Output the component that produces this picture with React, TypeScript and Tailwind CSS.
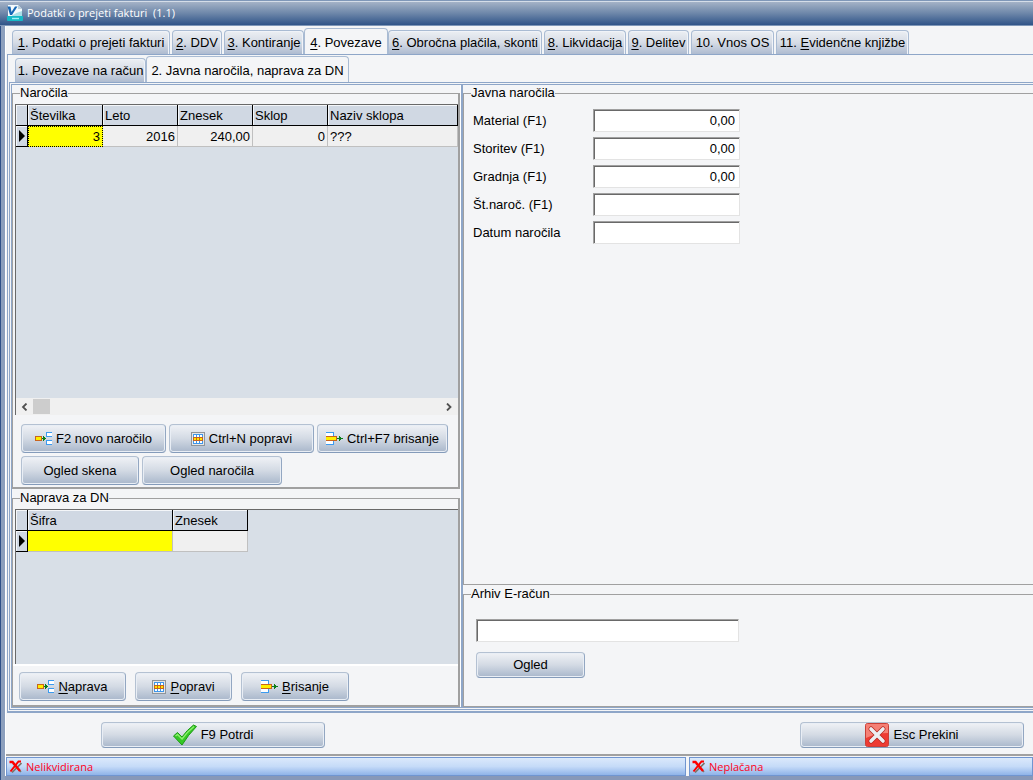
import { useState } from 'react'
import type { ReactNode } from 'react'
import clsx from 'clsx'

type Tab = { label: string; width: string }

const mainTabs: Tab[] = [
  { label: '&1. Podatki o prejeti fakturi', width: 'w-[158px]' },
  { label: '&2. DDV', width: 'w-[50px]' },
  { label: '&3. Kontiranje', width: 'w-[80px]' },
  { label: '&4. Povezave', width: 'w-[84px]' },
  { label: '&6. Obročna plačila, skonti', width: 'w-[154px]' },
  { label: '&8. Likvidacija', width: 'w-[82px]' },
  { label: '&9. Delitev', width: 'w-[61px]' },
  { label: '10. Vnos OS', width: 'w-[83px]' },
  { label: '11. &Evidenčne knjižbe', width: 'w-[133px]' },
]

const subTabs: Tab[] = [
  { label: '1. Povezave na račun', width: 'w-[131px]' },
  { label: '2. Javna naročila, naprava za DN', width: 'w-[203px]' },
]

const fields = [
  { id: 'material', label: 'Material (F1)', value: '0,00' },
  { id: 'storitev', label: 'Storitev (F1)', value: '0,00' },
  { id: 'gradnja', label: 'Gradnja (F1)', value: '0,00' },
  { id: 'stnaroc', label: 'Št.naroč. (F1)', value: '' },
  { id: 'datum', label: 'Datum naročila', value: '' },
]

// "&" marks the accelerator letter
function Accel({ text }: { text: string }) {
  const i = text.indexOf('&')
  if (i < 0) return <span>{text}</span>
  return (
    <span>
      {text.slice(0, i)}
      <u className="decoration-1 underline-offset-2">{text[i + 1]}</u>
      {text.slice(i + 2)}
    </span>
  )
}

function AppIcon() {
  return (
    <svg width="16" height="16" viewBox="0 0 16 16">
      <path d="M1 0h10l4 4v12H1z" fill="#f4fafc" />
      <path d="M11 0v4h4z" fill="#b9cfdb" />
      <path d="M0.500 1.500h3l1 5.500L8 1.500h2.500L5 10H3z" fill="#1767b5" />
      <path d="M5 10.500q4-3 10-4.500v5H5z" fill="#a9dfe8" />
      <path d="M0 11h16v4q0 1-1 1H1q-1 0-1-1z" fill="#16b9c6" />
      <path d="M5 13.500h7" stroke="#9ff0f4" strokeWidth="1.400" />
    </svg>
  )
}

function InsertIcon() {
  return (
    <svg width="17" height="14" viewBox="0 0 17 14" shapeRendering="crispEdges">
      <rect x="0" y="4" width="6" height="5" fill="#c8641e" />
      <rect x="1" y="5" width="5" height="3" fill="#ffee00" />
      <path d="M6 4h1v5H6zM7 6h1v1H7z" fill="#c8641e" />
      <path d="M7 6h4v1H7zM8 4h1v5H8zM9 5h1v3H9z" fill="#0b7d1a" />
      <path d="M11 1h6v3h-6zM11 9h6v3h-6z" fill="#fff" />
      <path d="M11 0h6v1h-6zM11 0h1v5h-1zM11 4h6v1h-6zM11 8h6v1h-6zM11 8h1v5h-1zM11 12h6v1h-6z" fill="#3b9bf0" />
    </svg>
  )
}

function EditIcon() {
  return (
    <svg width="14" height="14" viewBox="0 0 14 14" shapeRendering="crispEdges">
      <rect width="14" height="14" fill="#8f9499" />
      <rect x="1" y="1" width="12" height="12" fill="#e4e6e8" />
      <rect x="2" y="2" width="10" height="10" fill="#3f96ea" />
      <path d="M3 3h2v2H3zM6 3h2v2H6zM9 3h2v2H9zM3 9h2v2H3zM6 9h2v2H6zM9 9h2v2H9z" fill="#fff" />
      <rect x="2" y="5" width="10" height="4" fill="#c8641e" />
      <path d="M3 6h2v2H3zM6 6h2v2H6zM9 6h2v2H9z" fill="#ffe600" />
    </svg>
  )
}

function DeleteIcon() {
  return (
    <svg width="17" height="14" viewBox="0 0 17 14" shapeRendering="crispEdges">
      <path d="M0 1h7v3H0zM0 9h7v3H0z" fill="#fff" />
      <path d="M0 0h8v1H0zM7 0h1v4H7zM7 9h1v4H7zM0 12h8v1H0z" fill="#3b9bf0" />
      <rect x="0" y="4" width="11" height="5" fill="#c8641e" />
      <rect x="0" y="5" width="10" height="3" fill="#ffee00" />
      <path d="M11 6h6v1h-6zM13 4h1v5h-1zM14 5h1v3h-1z" fill="#0b7d1a" />
    </svg>
  )
}

function CheckIcon() {
  return (
    <svg width="24" height="22" viewBox="0 0 24 22">
      <path d="M0.500 12l4-3.500 4.500 4.500Q14 6 20.500 1l3 1.500Q15 11 9 21z" fill="#35c825" stroke="#1d9a16" />
      <path d="M2.500 12l2-1.500 4.500 4.500Q14 8 21 2.500" fill="none" stroke="#8df06f" strokeWidth="1.400" />
    </svg>
  )
}

function CancelIcon() {
  return (
    <svg width="24" height="24" viewBox="0 0 24 24">
      <rect x="0.500" y="0.500" width="23" height="23" rx="2" fill="#ee3b33" stroke="#c94038" />
      <path d="M1 2q0-1 1-1h20q1 0 1 1v8Q12 10 1 15z" fill="#f58075" />
      <path d="M6 6l12 12M18 6L6 18" stroke="#b3261e" strokeWidth="5" strokeLinecap="round" />
      <path d="M6 6l12 12M18 6L6 18" stroke="#eceef2" strokeWidth="3.600" strokeLinecap="round" />
    </svg>
  )
}

function CrossIcon() {
  return (
    <svg width="13" height="13" viewBox="0 0 13 13">
      <path d="M4 3.500l8 8.500M12.500 3L3 12.500" stroke="#7a7468" strokeWidth="1.600" />
      <path d="M0.500 2h3l7.500 9" fill="none" stroke="#ff0000" strokeWidth="2.400" />
      <path d="M12 1.500H9.500L1.500 11.500" fill="none" stroke="#ff0000" strokeWidth="2" />
    </svg>
  )
}

function Btn({ className, icon, text }: { className: string; icon?: ReactNode; text: string }) {
  return (
    <button
      type="button"
      className={clsx(
        'flex shrink-0 items-center justify-center gap-1 rounded border border-[#b4c1d2] border-b-[#849bba] border-r-[#93a7c2] bg-linear-to-b from-[#f0f2f6] via-[#d3dae4] to-[#a9b7cb] shadow-[inset_0_0_0_1px_#e9eef5]',
        className,
      )}
    >
      {icon}
      <Accel text={text} />
    </button>
  )
}

function TabBar({
  tabs,
  active,
  onSelect,
  className,
}: {
  tabs: Tab[]
  active: number
  onSelect: (i: number) => void
  className: string
}) {
  return (
    <div role="tablist" className={clsx('flex items-end gap-[2px]', className)}>
      {tabs.map((tab, i) => (
        <button
          key={tab.label}
          type="button"
          role="tab"
          aria-selected={i === active}
          onClick={() => onSelect(i)}
          className={clsx(
            'flex shrink-0 items-center justify-center rounded-t border border-b-0 border-[#a9bbd3] whitespace-nowrap',
            tab.width,
            i === active
              ? '-mx-[2px] -mb-px h-[27px] bg-[#f4f5f7] pt-[2px]'
              : 'h-6 bg-linear-to-b from-[#eceff3] via-[#d6dce6] to-[#aebbd0] pt-px shadow-[inset_-1px_1px_0_#f0f3f8]',
          )}
        >
          <Accel text={tab.label} />
        </button>
      ))}
    </div>
  )
}

function Group({ title, className, children }: { title: string; className?: string; children: ReactNode }) {
  return (
    <fieldset className={clsx('min-w-0 border-t border-l border-[#a0a0a0]', className)}>
      <legend className="ml-[7px] leading-3">{title}</legend>
      {children}
    </fieldset>
  )
}

const th =
  'h-[21px] border-r border-b border-r-black border-b-black bg-[#d0d8e3] px-[2px] pt-px text-left font-normal shadow-[inset_1px_1px_0_#f4f6f9]'
const td = 'h-[21px] border-r border-b border-[#c0c0c0] bg-[#f0f0f0] px-[2px] pt-px'

function RowMarker() {
  return (
    <td className="border-r border-b border-black bg-[#d0d8e3] shadow-[inset_1px_1px_0_#f4f6f9]">
      <svg width="6" height="12" viewBox="0 0 6 12" className="ml-[3px]">
        <path d="M0 0l6 6-6 6z" fill="#000" />
      </svg>
    </td>
  )
}

function OrdersTable() {
  return (
    <table className="w-full table-fixed border-separate border-spacing-0">
      <thead>
        <tr>
          <th className={clsx(th, 'w-3')} />
          <th className={clsx(th, 'w-[75px]')}>Številka</th>
          <th className={clsx(th, 'w-[75px]')}>Leto</th>
          <th className={clsx(th, 'w-[75px]')}>Znesek</th>
          <th className={clsx(th, 'w-[75px]')}>Sklop</th>
          <th className={th}>Naziv sklopa</th>
        </tr>
      </thead>
      <tbody>
        <tr>
          <RowMarker />
          <td className="border border-dotted border-black bg-[#ffff00] px-[2px] text-right">3</td>
          <td className={clsx(td, 'text-right')}>2016</td>
          <td className={clsx(td, 'text-right')}>240,00</td>
          <td className={clsx(td, 'text-right')}>0</td>
          <td className={td}>???</td>
        </tr>
      </tbody>
    </table>
  )
}

function WorkOrderTable() {
  return (
    <table className="w-[232px] table-fixed border-separate border-spacing-0">
      <thead>
        <tr>
          <th className={clsx(th, 'w-3')} />
          <th className={clsx(th, 'w-[145px]')}>Šifra</th>
          <th className={clsx(th, 'w-[75px]')}>Znesek</th>
        </tr>
      </thead>
      <tbody>
        <tr>
          <RowMarker />
          <td className="h-[21px] border-r border-b border-[#c0c0c0] bg-[#ffff00]" />
          <td className={td} />
        </tr>
      </tbody>
    </table>
  )
}

function ScrollBar() {
  return (
    <div className="flex h-[17px] items-stretch bg-[#f0f0f0]">
      <button type="button" aria-label="Levo" className="flex w-[17px] items-center justify-center">
        <svg width="7" height="8" viewBox="0 0 7 8">
          <path d="M5.500 0.500L2 4l3.500 3.500" fill="none" stroke="#505050" strokeWidth="1.800" />
        </svg>
      </button>
      <div className="my-px w-[17px] bg-[#cdcdcd]" />
      <div className="flex-1" />
      <button type="button" aria-label="Desno" className="flex w-[17px] items-center justify-center">
        <svg width="7" height="8" viewBox="0 0 7 8">
          <path d="M1 0.500L4.500 4 1 7.500" fill="none" stroke="#505050" strokeWidth="1.800" />
        </svg>
      </button>
    </div>
  )
}

const sunken =
  'h-[23px] border border-[#a0a0a0] border-r-[#e3e3e3] border-b-[#e3e3e3] bg-white shadow-[inset_1px_1px_0_#696969]'

function StatusCell({ text }: { text: string }) {
  return (
    <div className="flex h-[19px] items-center gap-1 border border-[#7095d0] bg-linear-to-b from-[#dbe9fb] via-[#c5dbf8] to-[#8fb3e8] pl-[2px] font-['Open_Sans',sans-serif] text-[11px] text-[#ff0020]">
      <CrossIcon />
      {text}
    </div>
  )
}

export default function App() {
  const [mainTab, setMainTab] = useState(3)
  const [subTab, setSubTab] = useState(1)

  return (
    <div className="flex min-h-screen flex-col bg-[#8c9fbd] font-['Liberation_Sans',Arial,sans-serif] text-[13px] leading-4 text-black">
      <header className="flex h-[26px] shrink-0 items-center gap-1 border-t border-b border-[#7f97b8] bg-linear-to-b from-[#a9b6c9] via-[#6f88aa] to-[#305488] pl-[7px] font-['Open_Sans',sans-serif] text-[11px] font-medium text-white shadow-[inset_0_1px_0_#d5dde8]">
        <AppIcon />
        <h1 className="whitespace-pre">Podatki o prejeti fakturi  (1.1)</h1>
      </header>

      <div className="flex flex-1 flex-col border-l border-[#2f5088] pl-1">
        <main className="flex flex-1 flex-col border-l border-white bg-[#f4f5f7] pt-[2px]">
          <TabBar tabs={mainTabs} active={mainTab} onSelect={setMainTab} className="pl-[6px]" />

          <div className="ml-px flex flex-1 flex-col border-t border-b-2 border-l border-[#8ea6c8] pb-px">
            <TabBar tabs={subTabs} active={subTab} onSelect={setSubTab} className="pt-px pl-[7px]" />

            <div className="ml-px flex flex-1 flex-col border-t border-b border-l border-[#8ea6c8] pt-px pb-px pl-px">
              <div className="flex flex-1 border-t border-b border-l border-[#8ea6c8]">
                <div className="flex w-[449px] shrink-0 flex-col border-r border-white pt-[2px]">
                  <Group title="Naročila" className="flex flex-col border-r-2 border-b-2">
                    <div className="mt-[5px] ml-[2px] flex h-[311px] flex-col border-t border-l border-[#696969] bg-[#d8dfe7]">
                      <OrdersTable />
                      <div className="flex-1" />
                      <ScrollBar />
                    </div>
                    <div className="flex gap-[3px] pt-[9px] pl-2">
                      <Btn className="h-[29px] w-[145px]" icon={<InsertIcon />} text="F2 novo naročilo" />
                      <Btn className="h-[29px] w-[145px]" icon={<EditIcon />} text="Ctrl+N popravi" />
                      <Btn className="h-[29px] w-[131px]" icon={<DeleteIcon />} text="Ctrl+F7 brisanje" />
                    </div>
                    <div className="flex gap-[3px] pt-[3px] pb-[2px] pl-2">
                      <Btn className="h-[29px] w-[118px]" text="Ogled skena" />
                      <Btn className="h-[29px] w-[140px]" text="Ogled naročila" />
                    </div>
                  </Group>

                  <Group title="Naprava za DN" className="mt-[3px] flex flex-1 flex-col border-r-2 border-b-2">
                    <div className="mt-[5px] ml-[2px] h-[155px] border-t border-l border-[#696969] bg-[#d8dfe7]">
                      <WorkOrderTable />
                    </div>
                    <div className="flex gap-[9px] border-t-2 border-white pt-[6px] pb-1 pl-[6px]">
                      <Btn className="h-[29px] w-[107px]" icon={<InsertIcon />} text="&Naprava" />
                      <Btn className="h-[29px] w-[97px]" icon={<EditIcon />} text="&Popravi" />
                      <Btn className="h-[29px] w-[108px]" icon={<DeleteIcon />} text="&Brisanje" />
                    </div>
                  </Group>
                </div>

                <div className="flex flex-1 flex-col border-l-2 border-[#8ea6c8] pt-[2px]">
                  <Group title="Javna naročila" className="flex-1 border-b">
                    <div className="flex flex-col gap-[5px] pt-[10px] pl-[9px]">
                      {fields.map((f) => (
                        <div key={f.id} className="flex items-center">
                          <label htmlFor={f.id} className="w-[120px]">
                            {f.label}
                          </label>
                          <input
                            id={f.id}
                            defaultValue={f.value}
                            className={clsx(sunken, 'w-[147px] px-1 text-right')}
                          />
                        </div>
                      ))}
                    </div>
                  </Group>

                  <Group title="Arhiv E-račun" className="mt-[3px] border-b">
                    <div className="flex flex-col items-start gap-[10px] pt-[19px] pb-7 pl-3">
                      <input aria-label="Arhiv E-račun" className={clsx(sunken, 'w-[263px] px-1')} />
                      <Btn className="h-[26px] w-[109px]" text="Ogled" />
                    </div>
                  </Group>
                </div>
              </div>
            </div>
          </div>

          <footer className="flex justify-between border-b-2 border-[#a0a0a0] pt-[9px] pr-[9px] pb-[6px] pl-[95px]">
            <Btn className="h-[26px] w-[224px]" icon={<CheckIcon />} text="F9 Potrdi" />
            <Btn className="h-[26px] w-[224px]" icon={<CancelIcon />} text="Esc Prekini" />
          </footer>
          <div className="grid grid-cols-[680fr_344fr] gap-[3px] pt-px">
            <StatusCell text="Nelikvidirana" />
            <StatusCell text="Neplačana" />
          </div>
        </main>
        <div className="h-[5px] bg-[#8798b8]" />
      </div>
    </div>
  )
}
